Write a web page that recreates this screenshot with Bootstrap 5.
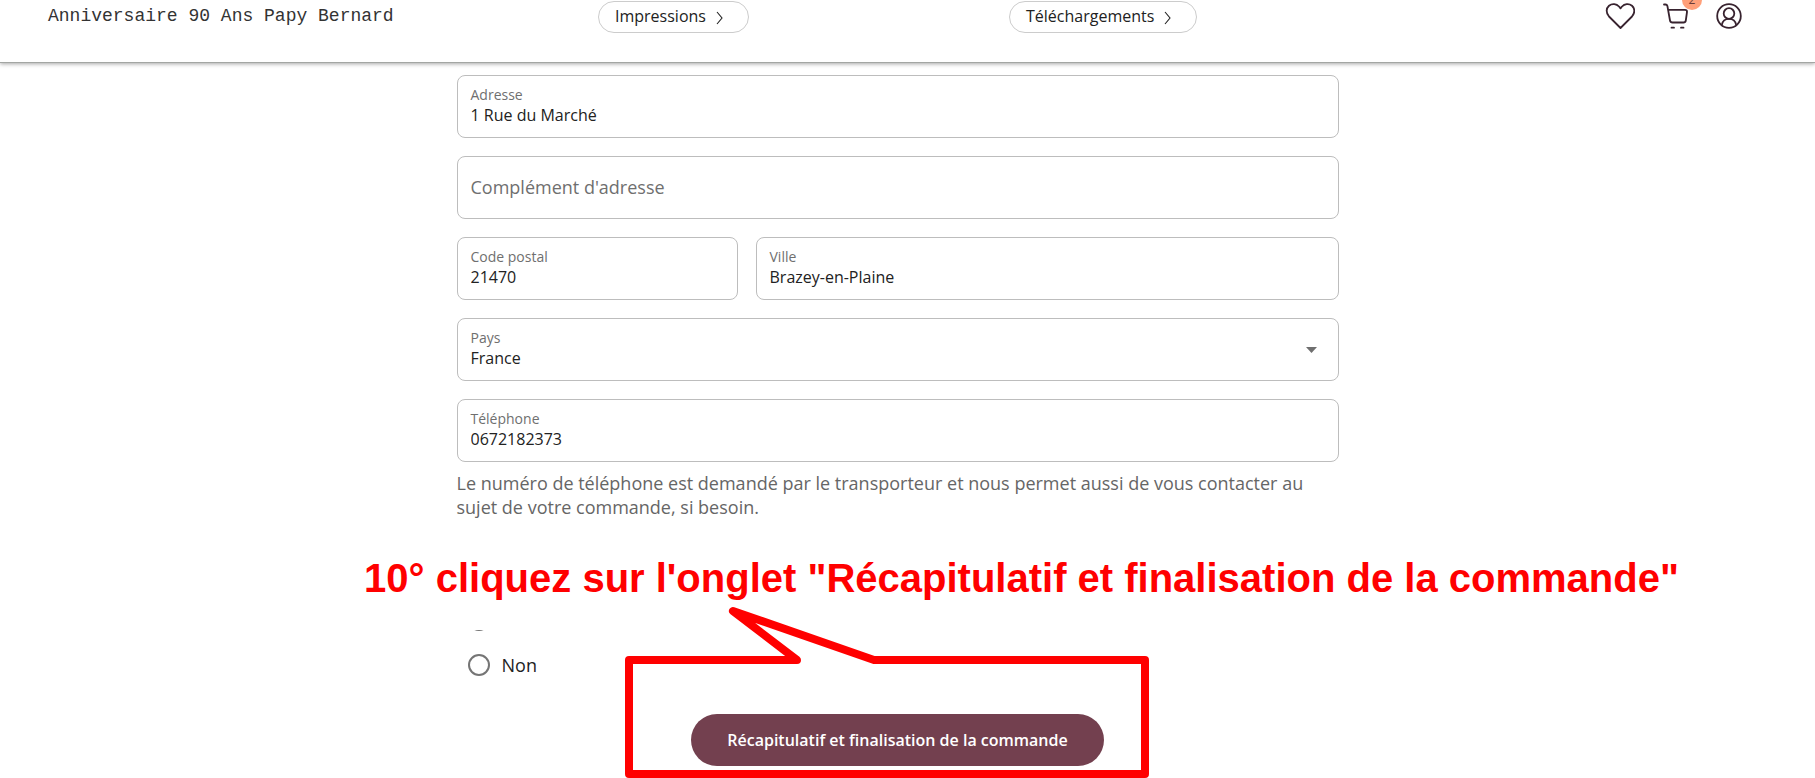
<!DOCTYPE html>
<html lang="fr">
<head>
<meta charset="utf-8">
<meta name="viewport" content="width=device-width, initial-scale=1">
<title>Adresse de livraison</title>
<link href="https://cdn.jsdelivr.net/npm/bootstrap@5.3.0/dist/css/bootstrap.min.css" rel="stylesheet">
<style>
  body { font-family: "Open Sans", sans-serif; color: #222; font-size: 16px; background: #fff; }
  .site-bar { display: grid; grid-template-columns: 550fr 411fr 733fr; height: 63px; padding: 1px 73px 0 48px; border-bottom: 1px solid #a3a6a3; box-shadow: 0 1px 4px rgba(0,0,0,.35); }
  .project-name { font: 18px/30px "Liberation Mono", monospace; color: #333; }
  .pill { height: 32px; padding: 0 21px 2px 16px; border: 1px solid #ccc; border-radius: 16px; color: #222; line-height: 28px; background: #fff; }
  .pill svg { margin-left: 7px; }
  .tools { gap: 28px; height: 30px; }
  .tools a { color: #38232f; line-height: 0; }
  .cart-count { position: absolute; left: 19px; top: -13px; width: 20px; height: 20px; border-radius: 50%; background: #ffa07a; color: #6b3b36; font-size: 12px; line-height: 20px; text-align: center; }
  .delivery { max-width: 882px; }
  .fields { gap: 18px; padding-top: 12px; }
  .page { padding-right: 20px; }
  .field { display: block; height: 63px; padding: 8px 13px; border: 1px solid #bdbdbd; border-radius: 8px; background: #fff; }
  .field label { display: block; font-size: 14px; line-height: 21px; color: #6f6f6f; }
  .field input, .field select { display: block; width: 100%; height: 20px; padding: 0; border: 0; outline: 0; background: none; color: #222; font-size: 16px; line-height: 20px; appearance: none; }
  .field-empty input { height: 43px; font-size: 18px; }
  .field-empty input::placeholder { color: #6f6f6f; opacity: 1; }
  .arrow { position: absolute; right: 21px; top: 28px; }
  .town-row { display: grid; grid-template-columns: 281fr 583fr; gap: 18px; }
  .hint { font-size: 18px; line-height: 24px; color: #666; padding-top: 9px; }
  .step-note { padding: 35px 0 0 228px; font: bold 40px/48px "Liberation Sans", Arial, sans-serif; color: #f00; text-align: center; }
  .choices { padding: 28px 0 0 11px; }
  .cut { height: 1px; overflow: hidden; }
  .choices input { appearance: none; width: 22px; height: 22px; margin: 0; border: 2px solid #757575; border-radius: 50%; background: #fff; }
  .choices label { font-size: 18px; line-height: 24px; }
  .next { height: 24px; margin-top: 22px; gap: 12px; }
  .confirm { position: relative; width: 516px; padding: 37px 0 12px; }
  .btn-confirm { position: relative; width: 413px; height: 52px; border: 0; border-radius: 26px; background: #73404f; color: #fff; font-size: 16px; font-weight: 600; }
  .callout { position: absolute; left: -21px; bottom: 0; pointer-events: none; }
</style>
</head>
<body>
<header class="site-bar">
  <div class="project-name text-nowrap">Anniversaire 90 Ans Papy Bernard</div>
  <div><button type="button" class="pill">Impressions<svg width="14" height="14" viewBox="0 0 14 14" fill="none" stroke="#222" stroke-width="1.1"><path d="M4 1 9 7l-5 6"/></svg></button></div>
  <div class="d-flex justify-content-between">
    <button type="button" class="pill text-nowrap">Téléchargements<svg width="14" height="14" viewBox="0 0 14 14" fill="none" stroke="#222" stroke-width="1.1"><path d="M4 1 9 7l-5 6"/></svg></button>
    <nav class="tools d-flex align-items-center">
      <a href="#" aria-label="Favoris"><svg width="30" height="26" viewBox="0 0 30 26" fill="none" stroke="currentColor" stroke-width="1.8" stroke-linejoin="round"><path d="M15.500 25L4 13.500C.8 10 1 5.300 4 2.700C7.300 0 11.500.8 14 3.500L15.500 5.300L17 3.500C19.500.8 23.700 0 27 2.700C30 5.300 30.200 10 27 13.500Z"/></svg></a>
      <a href="#" class="position-relative" aria-label="Panier"><svg width="25" height="26" viewBox="0 0 25 26" fill="none" stroke="currentColor" stroke-width="1.8" stroke-linecap="round" stroke-linejoin="round"><path d="M1 1.500H2.500Q4 1.500 4.400 3L7 17.500Q7.400 19.500 9.500 19.500H20.500Q22.500 19.500 22.800 17.500L24 9Q24.200 6.800 22 6.800H5.200M8.500 24.700H11M18 24.700H20.500"/></svg><span class="cart-count">2</span></a>
      <a href="#" aria-label="Mon compte"><svg width="26" height="26" viewBox="0 0 26 26" fill="none" stroke="currentColor" stroke-width="1.8"><circle cx="13" cy="13" r="11.800"/><circle cx="13" cy="10.500" r="5.300"/><path d="M5.800 22C6.500 18 9.500 15.800 13 15.800S19.500 18 20.200 22"/></svg></a>
    </nav>
  </div>
</header>
<main>
  <form>
    <div class="page">
      <div class="delivery mx-auto">
        <div class="fields d-flex flex-column">
          <div class="field"><label for="adresse">Adresse</label><input id="adresse" type="text" value="1 Rue du Marché"></div>
          <div class="field field-empty"><input type="text" aria-label="Complément d'adresse" placeholder="Complément d'adresse"></div>
          <div class="town-row">
            <div class="field"><label for="cp">Code postal</label><input id="cp" type="text" value="21470"></div>
            <div class="field"><label for="ville">Ville</label><input id="ville" type="text" value="Brazey-en-Plaine"></div>
          </div>
          <div class="field position-relative"><label for="pays">Pays</label><select id="pays"><option>France</option></select><svg class="arrow" width="11" height="6" viewBox="0 0 11 6" fill="#6f6f6f"><path d="M0 0h11L5.500 6z"/></svg></div>
          <div class="field"><label for="tel">Téléphone</label><input id="tel" type="tel" value="0672182373"></div>
        </div>
        <p class="hint mb-0">Le numéro de téléphone est demandé par le transporteur et nous permet aussi de vous contacter au sujet de votre commande, si besoin.</p>
      </div>
    </div>
    <div class="step-note">10° cliquez sur l'onglet "Récapitulatif et finalisation de la commande"</div>
    <div class="page">
      <div class="delivery mx-auto">
        <div class="choices">
          <div class="cut d-flex align-items-end"><input type="radio" name="choix" aria-label="Oui"></div>
          <div class="next d-flex align-items-center"><input id="non" type="radio" name="choix"><label for="non">Non</label></div>
        </div>
        <div class="confirm mx-auto text-center">
          <svg class="callout" width="530" height="175" viewBox="0 0 530 175" fill="none" stroke="#f00" stroke-width="8" stroke-linejoin="round"><path d="M10 57H178L114 8L255 57H526V171H10Z"/></svg>
          <button type="button" class="btn-confirm">Récapitulatif et finalisation de la commande</button>
        </div>
      </div>
    </div>
  </form>
</main>
<script src="https://cdn.jsdelivr.net/npm/bootstrap@5.3.0/dist/js/bootstrap.bundle.min.js"></script>
</body>
</html>
